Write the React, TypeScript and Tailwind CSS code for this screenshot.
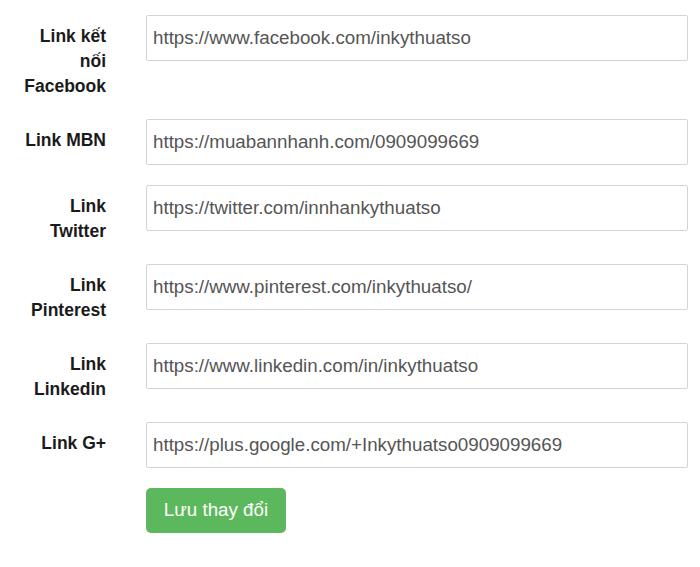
const fields = [
  { label: "Link kết nối Facebook", value: "https://www.facebook.com/inkythuatso" },
  { label: "Link MBN", value: "https://muabannhanh.com/0909099669" },
  { label: "Link Twitter", value: "https://twitter.com/innhankythuatso" },
  { label: "Link Pinterest", value: "https://www.pinterest.com/inkythuatso/" },
  { label: "Link Linkedin", value: "https://www.linkedin.com/in/inkythuatso" },
  { label: "Link G+", value: "https://plus.google.com/+Inkythuatso0909099669" },
];

export default function App() {
  return (
    <div className="min-h-[567px] w-[700px] bg-white pt-[15px] font-[family-name:'Liberation_Sans',Arial,sans-serif]">
      <form onSubmit={(e) => e.preventDefault()}>
        {fields.map((f) => (
          <div key={f.label} className="mb-[20px] flex items-start">
            <label className="ml-[18px] w-[88px] shrink-0 pt-[9px] text-right text-[17.5px] leading-[25px] font-bold text-[#1a1a1a]">
              {f.label}
            </label>
            <input
              type="text"
              defaultValue={f.value}
              className="ml-[40px] h-[46px] w-[542px] rounded-[2px] border border-[#d4d4d4] bg-white px-[6px] pb-[1px] text-[18.75px] text-[#555] outline-none"
            />
          </div>
        ))}
        <div className="pl-[146px]">
          <button
            type="submit"
            className="h-[45px] w-[140px] rounded-[5px] bg-[#5cb85c] pb-[1px] text-[18.75px] text-white"
          >
            Lưu thay đổi
          </button>
        </div>
      </form>
    </div>
  );
}
